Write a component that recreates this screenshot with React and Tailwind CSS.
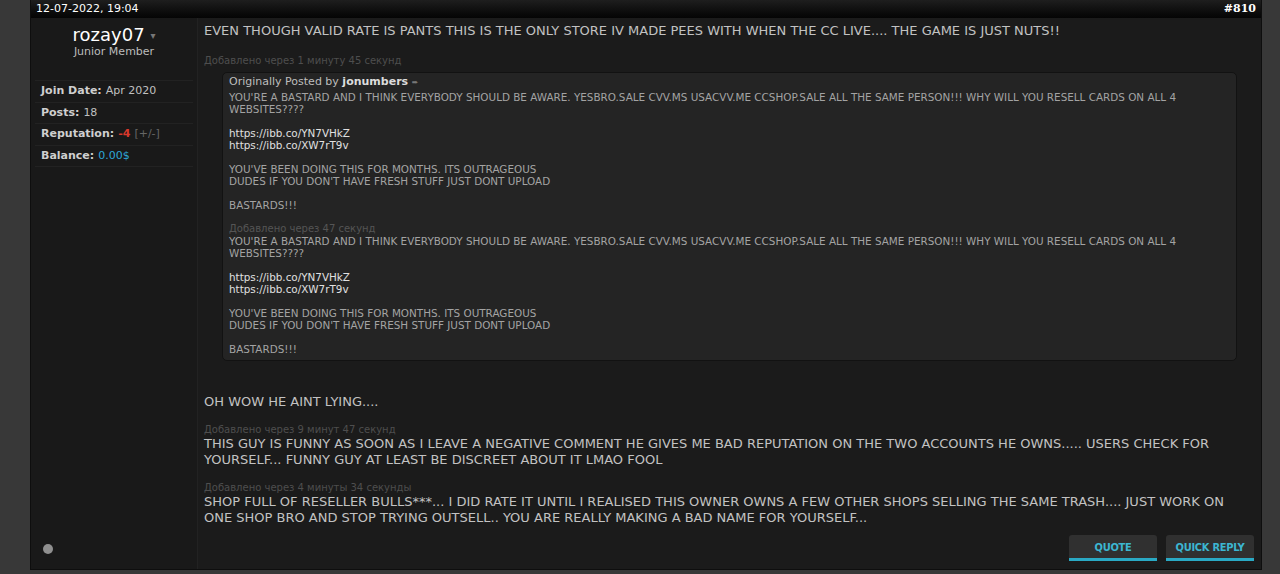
import { useState } from 'react';

const quoteBody = (
  <>
    <div>YOU'RE A BASTARD AND I THINK EVERYBODY SHOULD BE AWARE. YESBRO.SALE CVV.MS USACVV.ME CCSHOP.SALE ALL THE SAME PERSON!!! WHY WILL YOU RESELL CARDS ON ALL 4 WEBSITES????</div>
    <div className="h-3" />
    <div className="text-[#e0e0e0]">https://ibb.co/YN7VHkZ</div>
    <div className="text-[#e0e0e0]">https://ibb.co/XW7rT9v</div>
    <div className="h-3" />
    <div>YOU'VE BEEN DOING THIS FOR MONTHS. ITS OUTRAGEOUS</div>
    <div>DUDES IF YOU DON'T HAVE FRESH STUFF JUST DONT UPLOAD</div>
    <div className="h-3" />
    <div>BASTARDS!!!</div>
  </>
);

function Added({ children, className = '' }) {
  return <div className={`text-[10px] leading-[12px] text-[#4e4e4e] ${className}`}>{children}</div>;
}

function InfoRow({ label, children }) {
  return (
    <div className="flex items-center h-[21.5px] border-b border-[#222] px-[6px] text-[11px] text-[#c0c0c0]">
      <span className="font-bold text-[#cfcfcf] mr-1">{label}</span>
      {children}
    </div>
  );
}

function ActionButton({ children }) {
  const [hover, setHover] = useState(false);
  return (
    <button
      onMouseEnter={() => setHover(true)}
      onMouseLeave={() => setHover(false)}
      className={`w-[88px] h-[26px] pt-[4px] rounded-t-[3px] border-b-[3px] border-[#2aa9c4] text-[11px] font-bold tracking-tight text-[#3cb6d1] ${hover ? 'bg-[#3a3a3a]' : 'bg-[#303030]'}`}
      style={{ fontFamily: '"DejaVu Sans Condensed", "DejaVu Sans", sans-serif' }}
    >
      {children}
    </button>
  );
}

export default function App() {
  return (
    <div
      className="w-[1280px] h-[574px] bg-[#383838] px-[30px] pr-[18px] overflow-hidden"
      style={{ fontFamily: '"DejaVu Sans", Verdana, sans-serif' }}
    >
      <div className="h-[570px] flex flex-col border-x border-b border-[#0e0e0e]">
        {/* Header */}
        <div className="h-[18px] shrink-0 flex items-center justify-between px-[5px] bg-gradient-to-b from-[#1e1e1e] to-[#050505] text-[11px] text-white">
          <span>12-07-2022, 19:04</span>
          <span className="font-bold" style={{ fontFamily: '"DejaVu Serif", serif' }}>#810</span>
        </div>

        <div className="flex flex-1 min-h-0">
          {/* Sidebar */}
          <div className="w-[167px] shrink-0 bg-[#191919] border-r border-[#222] flex flex-col px-[4px]">
            <div className="text-center pt-[7px]">
              <div className="text-[18px] leading-[20px] text-white">
                rozay07 <span className="text-[#777] text-[10px] align-middle">▾</span>
              </div>
              <div className="text-[11px] leading-[12px] text-[#bcbcbc]">Junior Member</div>
            </div>
            <div className="mt-[22px] border-t border-[#222]">
              <InfoRow label="Join Date:">Apr 2020</InfoRow>
              <InfoRow label="Posts:">18</InfoRow>
              <InfoRow label="Reputation:">
                <span className="text-[#d8382c] font-bold mr-1">-4</span>
                <span className="text-[#666]">[+/-]</span>
              </InfoRow>
              <InfoRow label="Balance:">
                <span className="text-[#2ea7d8]">0.00$</span>
              </InfoRow>
            </div>
            <div className="mt-auto mb-[15px] ml-[8px] w-[10px] h-[10px] rounded-full bg-[#8f8f8f]" />
          </div>

          {/* Content */}
          <div className="flex-1 bg-[#1b1b1b] pl-[6px] pr-[7px] flex flex-col">
            <div className="text-[13px] leading-[16px] text-[#c2c2c2] pt-[5px]">
              EVEN THOUGH VALID RATE IS PANTS THIS IS THE ONLY STORE IV MADE PEES WITH WHEN THE CC LIVE.... THE GAME IS JUST NUTS!!
            </div>
            <Added className="mt-[16px]">Добавлено через 1 минуту 45 секунд</Added>

            <div className="mt-[5px] ml-[18px] mr-[17px] bg-[#242424] border border-[#121212] rounded-[5px] px-[6px] pt-[3px] pb-[5px] text-[10.4px] leading-[12px] text-[#a3a3a3]">
              <div className="text-[11px] text-[#bdbdbd] mb-[2px]">
                Originally Posted by <span className="font-bold text-[#dcdcdc]">jonumbers</span>{' '}
                <span className="text-[#777] text-[8px]">➨</span>
              </div>
              {quoteBody}
              <div className="h-3" />
              <div className="text-[10px] leading-[12px] text-[#555]">Добавлено через 47 секунд</div>
              {quoteBody}
            </div>

            <div className="mt-[33px] text-[13px] leading-[16px] text-[#c2c2c2]">OH WOW HE AINT LYING....</div>

            <Added className="mt-[14px]">Добавлено через 9 минут 47 секунд</Added>
            <div className="text-[13px] leading-[16px] text-[#c2c2c2]">
              THIS GUY IS FUNNY AS SOON AS I LEAVE A NEGATIVE COMMENT HE GIVES ME BAD REPUTATION ON THE TWO ACCOUNTS HE OWNS..... USERS CHECK FOR YOURSELF... FUNNY GUY AT LEAST BE DISCREET ABOUT IT LMAO FOOL
            </div>

            <Added className="mt-[14px]">Добавлено через 4 минуты 34 секунды</Added>
            <div className="text-[13px] leading-[16px] text-[#c2c2c2]">
              SHOP FULL OF RESELLER BULLS***... I DID RATE IT UNTIL I REALISED THIS OWNER OWNS A FEW OTHER SHOPS SELLING THE SAME TRASH.... JUST WORK ON ONE SHOP BRO AND STOP TRYING OUTSELL.. YOU ARE REALLY MAKING A BAD NAME FOR YOURSELF...
            </div>

            <div className="mt-auto mb-[8px] flex justify-end gap-[9px]">
              <ActionButton>QUOTE</ActionButton>
              <ActionButton>QUICK REPLY</ActionButton>
            </div>
          </div>
        </div>
      </div>
    </div>
  );
}
